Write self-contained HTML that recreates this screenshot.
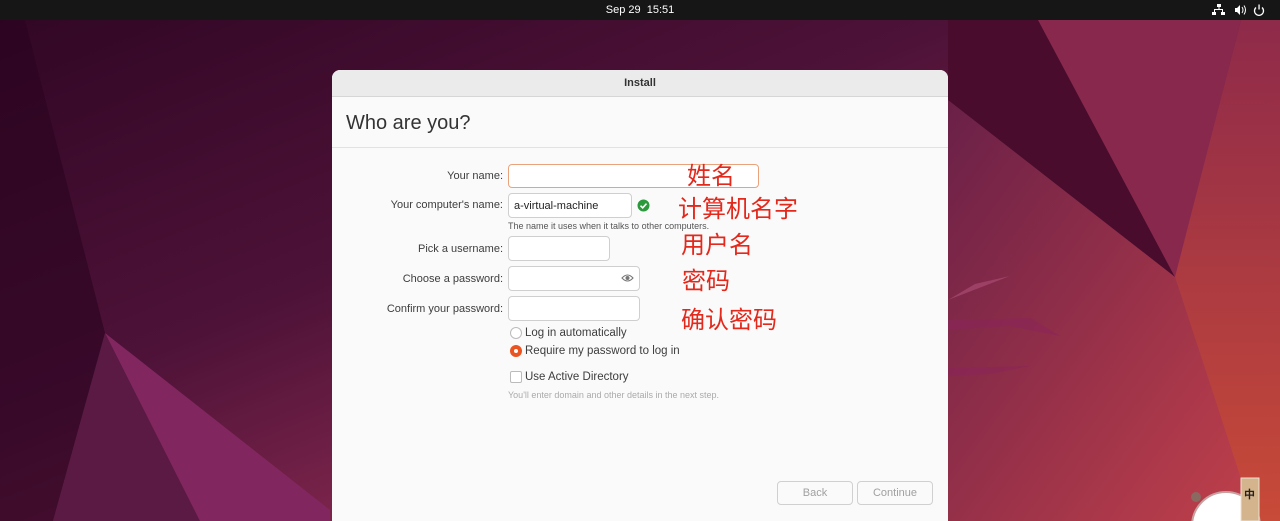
<!DOCTYPE html>
<html><head><meta charset="utf-8"><style>
*{margin:0;padding:0;box-sizing:border-box}
html,body{width:1280px;height:521px;overflow:hidden}
body{position:relative;font-family:"Liberation Sans","Noto Sans CJK SC",sans-serif;background:#3a0a2e}
.abs{position:absolute}
#top{left:0;top:0;width:1280px;height:20px;background:#161616;color:#fff;font-size:11px;text-align:center;line-height:20px}
#dlg{left:332px;top:70px;width:616px;height:451px;background:#fafafa;border-radius:8px 8px 0 0;overflow:hidden}
#tb{height:27px;background:#ebebeb;border-bottom:1px solid #d6d6d6;text-align:center;font-size:11px;font-weight:bold;color:#333;line-height:27px}
.lbl{font-size:11px;color:#3d3d3d;text-align:right;width:200px;left:303px}
.inp{background:#fff;border:1px solid #cfcfcf;border-radius:4px}
.cn{color:#e3281c;font-size:24px;font-family:"Noto Sans CJK SC",sans-serif;line-height:1}
.sm{font-size:11.5px;color:#3d3d3d}
.btn{border:1px solid #d0d0d0;border-radius:4px;background:#fafafa;color:#a0a0a0;font-size:11px;text-align:center;line-height:22px;height:24px}
</style></head><body>
<svg class="abs" style="left:0;top:0" width="1280" height="521">
<defs>
<linearGradient id="g" x1="0" y1="0" x2="1" y2="1"><stop offset="0" stop-color="#300624"/><stop offset="0.4" stop-color="#4e1238"/><stop offset="0.7" stop-color="#8a2a50"/><stop offset="1" stop-color="#c44444"/></linearGradient>
<linearGradient id="rp" x1="0" y1="0" x2="0" y2="1"><stop offset="0" stop-color="#8e2a4a"/><stop offset="1" stop-color="#c84a38"/></linearGradient>
<linearGradient id="mid" x1="0" y1="0" x2="1" y2="1"><stop offset="0" stop-color="#6a2048"/><stop offset="1" stop-color="#c0404a"/></linearGradient>
</defs>
<rect width="1280" height="521" fill="url(#g)"/>
<polygon points="0,20 25,20 105,333 53,521 0,521" fill="#2a0420" opacity="0.6"/>
<polygon points="105,333 53,521 200,521" fill="#5a1a44"/>
<polygon points="105,333 330,510 330,521 200,521" fill="#822660"/>
<polygon points="948,20 1038,20 1175,277 948,100" fill="#4a0c2c"/>
<polygon points="1038,20 1241,20 1175,277" fill="#88284c"/>
<polygon points="948,100 1175,277 1255,521 948,521" fill="url(#mid)"/>
<polygon points="1241,20 1280,20 1280,521 1255,521 1175,277" fill="url(#rp)"/>
<polygon points="948,300 1010,276 975,284" fill="#b0507a" opacity="0.6"/>
<polygon points="948,320 1030,318 1060,336 1010,326 948,330" fill="#8a2458" opacity="0.6"/>
<polygon points="948,368 1030,366 990,374 948,376" fill="#8a2458" opacity="0.6"/>
<circle cx="1226" cy="526" r="34" fill="#fff" stroke="#c8a0a0" stroke-width="2"/>
<circle cx="1196" cy="497" r="5" fill="#8a6a60"/><circle cx="1250" cy="486" r="5" fill="#8a6a60"/>
<rect x="1241" y="478" width="18" height="43" fill="#d4b48c" stroke="#f0e0d0"/>
<text x="1244" y="498" font-size="11" font-weight="bold" font-family="Noto Sans CJK SC" fill="#222">中</text>
</svg>
<div id="top" class="abs">Sep 29&nbsp; 15:51</div>
<svg class="abs" style="left:1212px;top:4px" width="60" height="13">
<g fill="#fff"><rect x="5" y="0" width="4" height="3"/><rect x="0" y="8" width="4" height="3"/><rect x="9" y="8" width="4" height="3"/><rect x="6.5" y="3" width="1" height="3"/><rect x="2" y="5" width="9" height="1"/><rect x="2" y="5" width="1" height="3"/><rect x="10" y="5" width="1" height="3"/>
<polygon points="23,4 25,4 28,1 28,11 25,8 23,8"/></g>
<path d="M30 3 Q32 6 30 9 M32 1.5 Q35 6 32 10.5" stroke="#fff" fill="none" stroke-width="1"/>
<path d="M44 3.5 A4.5 4.5 0 1 0 50 3.5" stroke="#fff" fill="none" stroke-width="1.3"/><rect x="46.4" y="0.5" width="1.3" height="5" fill="#fff"/>
</svg>
<div id="dlg" class="abs">
<div id="tb">Install</div>
<div class="abs" style="left:14px;top:42px;font-size:20px;color:#333">Who are you?</div>
<div class="abs" style="left:0;top:77px;width:616px;height:1px;background:#e2e2e2"></div>
</div>
<div class="abs lbl" style="top:170px">Your name:</div>
<div class="abs inp" style="left:508px;top:164px;width:251px;height:24px;border-color:#e9a37c"></div>
<div class="abs lbl" style="top:199px">Your computer's name:</div>
<div class="abs inp" style="left:508px;top:193px;width:124px;height:25px"></div>
<div class="abs" style="left:514px;top:200px;font-size:11px;color:#222">a-virtual-machine</div>
<svg class="abs" style="left:637px;top:199px" width="13" height="13"><circle cx="6.5" cy="6.5" r="6" fill="#2a9a3a"/><path d="M3.5 6.7 L5.7 8.8 L9.5 4.6" stroke="#fff" stroke-width="1.6" fill="none"/></svg>
<div class="abs" style="left:508px;top:221px;font-size:9px;color:#555">The name it uses when it talks to other computers.</div>
<div class="abs lbl" style="top:243px">Pick a username:</div>
<div class="abs inp" style="left:508px;top:236px;width:102px;height:25px"></div>
<div class="abs lbl" style="top:273px">Choose a password:</div>
<div class="abs inp" style="left:508px;top:266px;width:132px;height:25px"></div>
<svg class="abs" style="left:621px;top:273px" width="13" height="10"><path d="M1 5 Q6.5 -1 12 5 Q6.5 11 1 5Z" fill="none" stroke="#777" stroke-width="1.1"/><circle cx="6.5" cy="5" r="2" fill="#777"/></svg>
<div class="abs lbl" style="top:303px">Confirm your password:</div>
<div class="abs inp" style="left:508px;top:296px;width:132px;height:25px"></div>
<div class="abs" style="left:510px;top:327px;width:12px;height:12px;border:1px solid #bbb;border-radius:50%;background:#fff"></div>
<div class="abs sm" style="left:525px;top:327px">Log in automatically</div>
<div class="abs" style="left:510px;top:345px;width:12px;height:12px;border-radius:50%;background:#e95420"><div style="margin:4px;width:4px;height:4px;border-radius:50%;background:#fff"></div></div>
<div class="abs sm" style="left:525px;top:345px">Require my password to log in</div>
<div class="abs" style="left:510px;top:371px;width:12px;height:12px;border:1px solid #bbb;border-radius:2px;background:#fff"></div>
<div class="abs sm" style="left:525px;top:371px">Use Active Directory</div>
<div class="abs" style="left:508px;top:390px;font-size:9px;color:#aaa">You'll enter domain and other details in the next step.</div>
<div class="abs btn" style="left:777px;top:481px;width:76px">Back</div>
<div class="abs btn" style="left:857px;top:481px;width:76px">Continue</div>
<div class="abs cn" style="left:687px;top:162px">姓名</div>
<div class="abs cn" style="left:678px;top:195px">计算机名字</div>
<div class="abs cn" style="left:681px;top:231px">用户名</div>
<div class="abs cn" style="left:682px;top:267px">密码</div>
<div class="abs cn" style="left:681px;top:306px">确认密码</div>
</body></html>
